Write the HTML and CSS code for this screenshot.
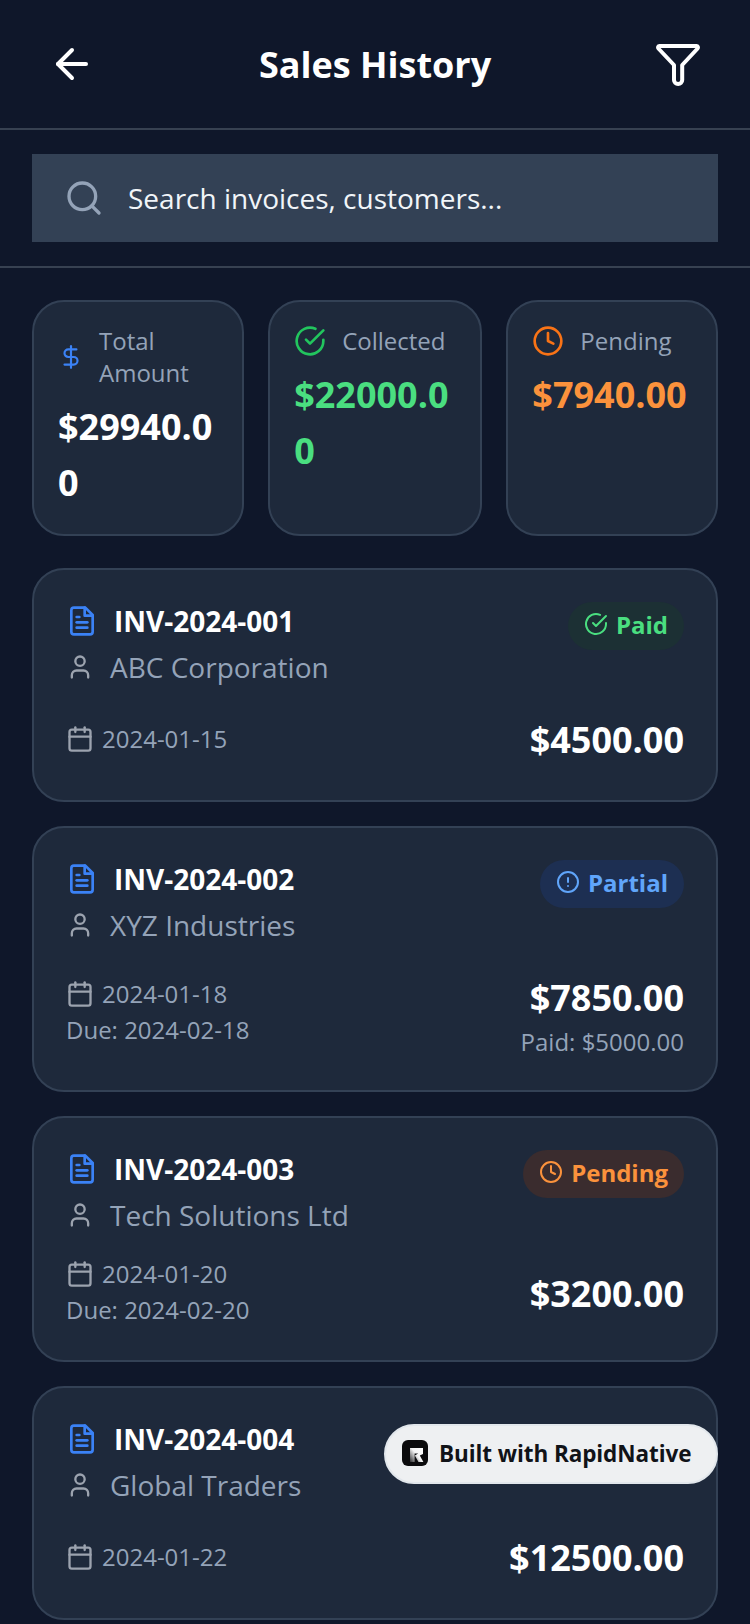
FILE: index.html
```html
<!DOCTYPE html>
<html lang="en">
<head>
<meta charset="UTF-8">
<meta name="viewport" content="width=device-width, initial-scale=1.0">
<title>Sales History</title>
<link rel="stylesheet" href="styles.css">
</head>
<body>

<svg class="defs" width="0" height="0">
    <symbol id="i-back" viewBox="0 0 24 24"><path d="M12 19l-7-7 7-7"/><path d="M19 12H5"/></symbol>
    <symbol id="i-filter" viewBox="0 0 48 48"><path d="M5.5 6h37a1.5 1.5 0 0 1 1.1 2.5L28.2 25v15a4.1 4.1 0 0 1-8.2 0V25L4.4 8.5A1.5 1.5 0 0 1 5.5 6z"/></symbol>
    <symbol id="i-search" viewBox="0 0 24 24"><circle cx="11" cy="11" r="8"/><path d="M21 21l-4.3-4.3"/></symbol>
    <symbol id="i-dollar" viewBox="0 0 24 24"><path d="M12 2v20"/><path d="M17 5H9.5a3.5 3.5 0 0 0 0 7h5a3.5 3.5 0 0 1 0 7H6"/></symbol>
    <symbol id="i-check" viewBox="0 0 24 24"><path d="M22 11.08V12a10 10 0 1 1-5.93-9.14"/><path d="M22 4L12 14.01l-3-3"/></symbol>
    <symbol id="i-clock" viewBox="0 0 24 24"><circle cx="12" cy="12" r="10"/><path d="M12 6v6l4 2"/></symbol>
    <symbol id="i-alert" viewBox="0 0 24 24"><circle cx="12" cy="12" r="10"/><path d="M12 8v4"/><path d="M12 16h.01"/></symbol>
    <symbol id="i-file" viewBox="0 0 24 24"><path d="M14.5 2H6a2 2 0 0 0-2 2v16a2 2 0 0 0 2 2h12a2 2 0 0 0 2-2V7.5L14.5 2z"/><path d="M14 2v6h6"/><path d="M16 13H8"/><path d="M16 17H8"/><path d="M10 9H8"/></symbol>
    <symbol id="i-user" viewBox="0 0 24 24"><path d="M19 21v-2a4 4 0 0 0-4-4H9a4 4 0 0 0-4 4v2"/><circle cx="12" cy="7" r="4"/></symbol>
    <symbol id="i-calendar" viewBox="0 0 24 24"><rect x="3" y="4" width="18" height="18" rx="2"/><path d="M16 2v4"/><path d="M8 2v4"/><path d="M3 10h18"/></symbol>
</svg>

<div class="screen">
    <header class="topbar">
        <svg class="icon icon-48 white"><use href="#i-back"/></svg>
        <h1>Sales History</h1>
        <svg class="icon icon-48 white filter"><use href="#i-filter"/></svg>
    </header>

    <div class="search-wrap">
        <div class="search">
            <svg class="icon icon-40 slate"><use href="#i-search"/></svg>
            <span>Search invoices, customers...</span>
        </div>
    </div>

    <main class="content">
        <section class="stats">
            <div class="stat">
                <div class="stat-head">
                    <svg class="icon icon-26 blue"><use href="#i-dollar"/></svg>
                    <span>Total Amount</span>
                </div>
                <div class="stat-value">$29940.00</div>
            </div>
            <div class="stat">
                <div class="stat-head">
                    <svg class="icon icon-32 green"><use href="#i-check"/></svg>
                    <span>Collected</span>
                </div>
                <div class="stat-value green-text">$22000.00</div>
            </div>
            <div class="stat">
                <div class="stat-head">
                    <svg class="icon icon-32 orange"><use href="#i-clock"/></svg>
                    <span>Pending</span>
                </div>
                <div class="stat-value orange-text">$7940.00</div>
            </div>
        </section>

        <article class="invoice">
            <div class="invoice-top">
                <div>
                    <div class="invoice-id">
                        <svg class="icon icon-32 blue"><use href="#i-file"/></svg>
                        <span>INV-2024-001</span>
                    </div>
                    <div class="customer">
                        <svg class="icon icon-28 grey"><use href="#i-user"/></svg>
                        <span>ABC Corporation</span>
                    </div>
                </div>
                <div class="badge badge-paid">
                    <svg class="icon icon-24"><use href="#i-check"/></svg>
                    <span>Paid</span>
                </div>
            </div>
            <div class="invoice-bottom">
                <div>
                    <div class="date">
                        <svg class="icon icon-28 grey"><use href="#i-calendar"/></svg>
                        <span>2024-01-15</span>
                    </div>
                </div>
                <div class="amounts">
                    <div class="amount">$4500.00</div>
                </div>
            </div>
        </article>

        <article class="invoice">
            <div class="invoice-top">
                <div>
                    <div class="invoice-id">
                        <svg class="icon icon-32 blue"><use href="#i-file"/></svg>
                        <span>INV-2024-002</span>
                    </div>
                    <div class="customer">
                        <svg class="icon icon-28 grey"><use href="#i-user"/></svg>
                        <span>XYZ Industries</span>
                    </div>
                </div>
                <div class="badge badge-partial">
                    <svg class="icon icon-24"><use href="#i-alert"/></svg>
                    <span>Partial</span>
                </div>
            </div>
            <div class="invoice-bottom">
                <div>
                    <div class="date">
                        <svg class="icon icon-28 grey"><use href="#i-calendar"/></svg>
                        <span>2024-01-18</span>
                    </div>
                    <div class="due">Due: 2024-02-18</div>
                </div>
                <div class="amounts">
                    <div class="amount">$7850.00</div>
                    <div class="paid">Paid: $5000.00</div>
                </div>
            </div>
        </article>

        <article class="invoice">
            <div class="invoice-top">
                <div>
                    <div class="invoice-id">
                        <svg class="icon icon-32 blue"><use href="#i-file"/></svg>
                        <span>INV-2024-003</span>
                    </div>
                    <div class="customer">
                        <svg class="icon icon-28 grey"><use href="#i-user"/></svg>
                        <span>Tech Solutions Ltd</span>
                    </div>
                </div>
                <div class="badge badge-pending">
                    <svg class="icon icon-24"><use href="#i-clock"/></svg>
                    <span>Pending</span>
                </div>
            </div>
            <div class="invoice-bottom">
                <div>
                    <div class="date">
                        <svg class="icon icon-28 grey"><use href="#i-calendar"/></svg>
                        <span>2024-01-20</span>
                    </div>
                    <div class="due">Due: 2024-02-20</div>
                </div>
                <div class="amounts">
                    <div class="amount">$3200.00</div>
                </div>
            </div>
        </article>

        <article class="invoice">
            <div class="invoice-top">
                <div>
                    <div class="invoice-id">
                        <svg class="icon icon-32 blue"><use href="#i-file"/></svg>
                        <span>INV-2024-004</span>
                    </div>
                    <div class="customer">
                        <svg class="icon icon-28 grey"><use href="#i-user"/></svg>
                        <span>Global Traders</span>
                    </div>
                </div>
            </div>
            <div class="invoice-bottom">
                <div>
                    <div class="date">
                        <svg class="icon icon-28 grey"><use href="#i-calendar"/></svg>
                        <span>2024-01-22</span>
                    </div>
                </div>
                <div class="amounts">
                    <div class="amount">$12500.00</div>
                </div>
            </div>
        </article>
    </main>

    <div class="built-with">
        <svg class="logo" viewBox="0 0 26 26">
            <defs>
                <linearGradient id="logo-fade" x1="0" y1="1" x2="1" y2="0.2">
                    <stop offset="0" stop-color="#2a2a2c"/>
                    <stop offset="0.55" stop-color="#f4f4f4"/>
                    <stop offset="1" stop-color="#ffffff"/>
                </linearGradient>
            </defs>
            <rect width="26" height="26" rx="6" fill="#0b0b0d"/>
            <path fill="url(#logo-fade)" d="M8 8h13v6l-3.2 1.4L21.4 22h-4.9l-3.7-6.4 3.4-2.1H12.6V22H8z"/>
        </svg>
        <span>Built with RapidNative</span>
    </div>
</div>

</body>
</html>
```

FILE: styles.css
```css
* {
    box-sizing: border-box;
}
html, body {
    margin: 0;
    height: 100%;
}
body {
    font-family: "Open Sans", "Noto Sans", sans-serif;
    background-color: #0f172a;
    color: #fff;
}
.defs {
    position: absolute;
}
.screen {
    position: relative;
    width: 750px;
    height: 1624px;
    overflow: hidden;
}

/* icons */
.icon {
    flex-shrink: 0;
    fill: none;
    stroke: currentColor;
    stroke-width: 2;
    stroke-linecap: round;
    stroke-linejoin: round;
}
.filter {
    stroke-width: 4;
}
.icon-48 { width: 48px; height: 48px; }
.icon-40 { width: 40px; height: 40px; }
.icon-32 { width: 32px; height: 32px; }
.icon-28 { width: 28px; height: 28px; }
.icon-26 { width: 26px; height: 26px; margin-right: -1px; }
.icon-24 { width: 24px; height: 24px; }
.white { color: #fff; }
.slate { color: #94a3b8; }
.grey { color: #9ca3af; }
.blue { color: #3b82f6; }
.green { color: #22c55e; }
.orange { color: #f97316; }
.green-text { color: #4ade80; }
.orange-text { color: #fb923c; }

/* header */
.topbar {
    display: flex;
    align-items: center;
    justify-content: space-between;
    height: 130px;
    padding: 0 48px;
    border-bottom: 2px solid #374151;
}
.topbar h1 {
    margin: 0;
    font-size: 36px;
    font-weight: 700;
    color: #fff;
}

/* search */
.search-wrap {
    padding: 24px 32px;
    border-bottom: 2px solid #374151;
}
.search {
    display: flex;
    align-items: center;
    gap: 24px;
    height: 88px;
    padding: 0 32px;
    background-color: #334155;
    font-size: 28px;
    color: #f1f5f9;
}

.content {
    padding: 32px;
}

/* stat cards */
.stats {
    display: grid;
    grid-template-columns: 211.5fr 213.5fr 211.5fr;
    column-gap: 24.5px;
    margin-bottom: 32px;
}
.stat {
    min-width: 0;
    padding: 23px 24px;
    background-color: #1e293b;
    border: 2px solid #334155;
    border-radius: 32px;
}
.stat-head {
    display: flex;
    align-items: center;
    gap: 16px;
    margin-bottom: 10px;
    font-size: 24px;
    line-height: 32px;
    color: #94a3b8;
}
.stat-value {
    font-size: 36px;
    font-weight: 700;
    line-height: 56px;
    overflow-wrap: anywhere;
}

/* invoices */
.invoice {
    margin-bottom: 24px;
    padding: 32px;
    background-color: #1e293b;
    border: 2px solid #334155;
    border-radius: 32px;
}
.invoice-top {
    display: flex;
    justify-content: space-between;
    align-items: flex-start;
}
.invoice-id {
    display: flex;
    align-items: center;
    gap: 16px;
    font-size: 28px;
    font-weight: 700;
}
.customer {
    display: flex;
    align-items: center;
    gap: 16px;
    margin-top: 8px;
    font-size: 28px;
    color: #94a3b8;
}
.badge {
    display: flex;
    align-items: center;
    gap: 8px;
    height: 48px;
    padding: 0 16px 4px;
    border-radius: 24px;
    font-size: 24px;
    font-weight: 700;
}
.badge-paid { background-color: #1c3034; color: #4ade80; }
.badge-partial { background-color: #1d2f52; color: #60a5fa; }
.badge-pending { background-color: #3a2c2e; color: #fb923c; }
.invoice-bottom {
    display: flex;
    justify-content: space-between;
    align-items: center;
    margin-top: 24px;
}
.date {
    display: flex;
    align-items: center;
    gap: 8px;
    font-size: 24px;
    line-height: 32px;
    color: #94a3b8;
}
.due {
    margin: 4px 0 2px;
    font-size: 24px;
    line-height: 32px;
    color: #94a3b8;
}
.amounts {
    text-align: right;
}
.amount {
    padding-top: 2px;
    font-size: 36px;
    font-weight: 700;
    line-height: 56px;
}
.paid {
    font-size: 24px;
    line-height: 32px;
    color: #94a3b8;
}

/* floating badge */
.built-with {
    position: absolute;
    left: 384px;
    top: 1424px;
    display: flex;
    align-items: center;
    gap: 11px;
    width: 334px;
    height: 60px;
    padding: 0 0 2px 16px;
    background-color: #eef0f2;
    border: 2px solid #e2e7ec;
    border-radius: 30px;
    font-size: 22.5px;
    font-weight: 700;
    letter-spacing: -0.08px;
    color: #111318;
}
.logo {
    width: 26px;
    height: 26px;
}
```
